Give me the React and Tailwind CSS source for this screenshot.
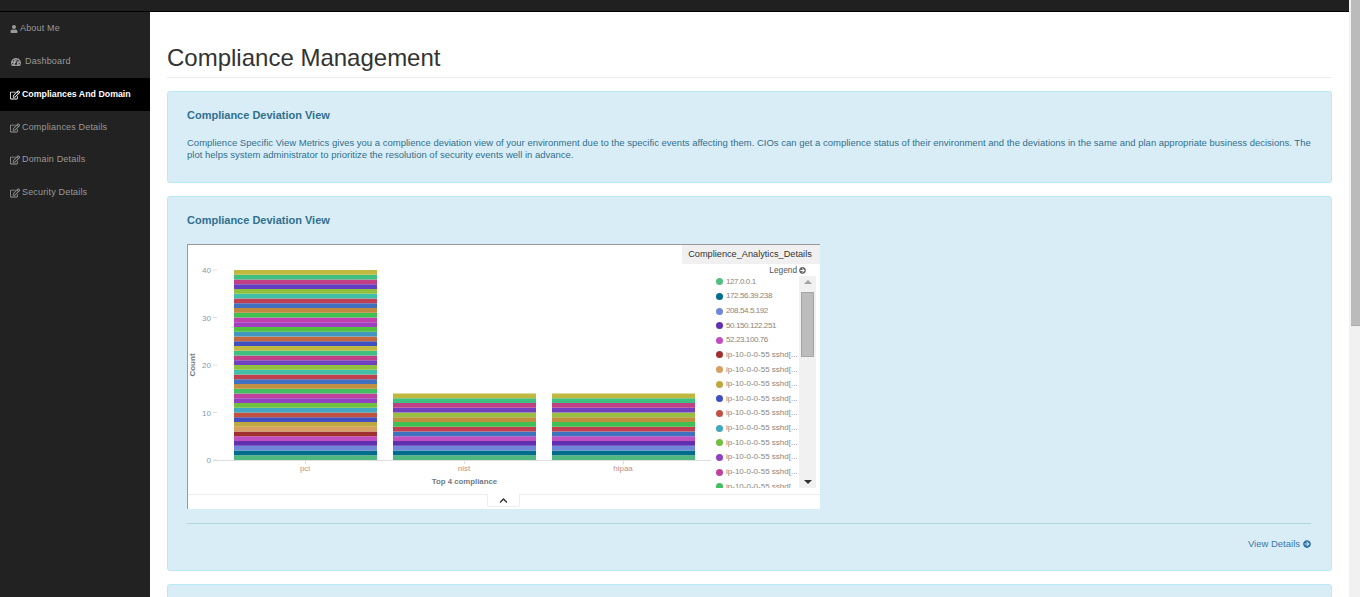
import React from "react"
import { FaUser, FaTachometerAlt, FaRegEdit, FaArrowCircleRight, FaChevronUp } from "react-icons/fa"

const menu = [
  { label: "About Me", icon: FaUser, iconSize: "text-[8px]", row: "h-[33px] gap-[2px] pl-[10px] text-[#999] text-[9px] tracking-[0.17px]" },
  { label: "Dashboard", icon: FaTachometerAlt, iconSize: "text-[10px]", row: "h-[33px] gap-[4px] pl-[11px] text-[#999] text-[9px] tracking-[0.17px]" },
  { label: "Compliances And Domain", icon: FaRegEdit, iconSize: "text-[10px]", row: "h-[33px] gap-[2px] pl-[10px] bg-black text-white font-bold text-[8.8px]" },
  { label: "Compliances Details", icon: FaRegEdit, iconSize: "text-[10px]", row: "h-[33px] gap-[2px] pl-[10px] text-[#999] text-[9px] tracking-[0.17px]" },
  { label: "Domain Details", icon: FaRegEdit, iconSize: "text-[10px]", row: "h-[32px] gap-[2px] pl-[10px] pb-[1px] text-[#999] text-[9px] tracking-[0.17px]" },
  { label: "Security Details", icon: FaRegEdit, iconSize: "text-[10px]", row: "h-[33px] gap-[2px] pl-[10px] text-[#999] text-[9px] tracking-[0.17px]" },
]

// bottom to top, one unit of the count per stripe
const palette = [
  "#50b87f", "#006e8a", "#7086d9", "#6030b0", "#c050c0", "#a03030", "#d8a060", "#c0a840",
  "#4050c0", "#c05040", "#40a8c0", "#70c040", "#9040c0", "#c040a0", "#40c060", "#c09040",
  "#4070c0", "#c04050", "#40c0a8", "#90c040", "#7040c0", "#c04088", "#40c080", "#c0b840",
  "#4050c0", "#c06840", "#4098c0", "#50c040", "#a040c0", "#c040b0", "#40c050", "#c08840",
  "#4070c0", "#c04058", "#40c0a8", "#90c040", "#6040c0", "#c04088", "#40c080", "#c0b840",
]
const shortBar = [
  "#50b87f", "#006e8a", "#7086d9", "#6030b0", "#c050c0", "#4070c0", "#c04050",
  "#40c050", "#c09040", "#98c040", "#7040c0", "#c04088", "#40c080", "#c0b840",
]

const legend = [
  ["127.0.0.1", "#50c080"],
  ["172.56.39.238", "#006e8a"],
  ["208.54.5.192", "#7086d9"],
  ["50.150.122.251", "#6030b0"],
  ["52.23.100.76", "#c050c0"],
  ["ip-10-0-0-55 sshd[...", "#a03030"],
  ["ip-10-0-0-55 sshd[...", "#d8a060"],
  ["ip-10-0-0-55 sshd[...", "#c0a840"],
  ["ip-10-0-0-55 sshd[...", "#4050c0"],
  ["ip-10-0-0-55 sshd[...", "#c05040"],
  ["ip-10-0-0-55 sshd[...", "#40a8c0"],
  ["ip-10-0-0-55 sshd[...", "#70c040"],
  ["ip-10-0-0-55 sshd[...", "#9040c0"],
  ["ip-10-0-0-55 sshd[...", "#c040a0"],
  ["ip-10-0-0-55 sshd[...", "#40c060"],
]

const UNIT = 4.75
const BASE = 460

function Bar({ x, colors }) {
  return colors.map((c, i) => (
    <rect key={i} x={x} y={BASE - (i + 1) * UNIT} width={143} height={UNIT} fill={c} />
  ))
}

function Plot() {
  return (
    <svg className="block shrink-0" width="525" height="249" viewBox="188 245 525 249" fontFamily="Liberation Sans, sans-serif">
      {[0, 10, 20, 30, 40].map((t) => {
        const y = BASE - t * UNIT
        return (
          <g key={t}>
            <line x1="213" x2="217" y1={y} y2={y} stroke="#ddd" />
            <text x="211" y={y + 3} textAnchor="end" fontSize="8" fill="#7f9ab0">{t}</text>
          </g>
        )
      })}
      <text transform="translate(195 365) rotate(-90)" textAnchor="middle" fontSize="8" fontWeight="700" fill="#6f7a84">Count</text>
      <Bar x={234} colors={palette} />
      <Bar x={393} colors={shortBar} />
      <Bar x={552} colors={shortBar} />
      <line x1="213" x2="711" y1="460.5" y2="460.5" stroke="#ddd" />
      {[["pci", 305], ["nist", 464], ["hipaa", 623]].map(([name, x]) => (
        <g key={name}>
          <line x1={x + 0.5} x2={x + 0.5} y1="461" y2="464" stroke="#ddd" />
          <text x={x} y="471" textAnchor="middle" fontSize="8" fill="#c08f88">{name}</text>
        </g>
      ))}
      <text x="464.5" y="484" textAnchor="middle" fontSize="7.8" fontWeight="700" fill="#6f7a84">Top 4 compliance</text>
    </svg>
  )
}

function Legend() {
  return (
    <div className="flex min-w-0 flex-1 flex-col pt-[19px]">
      <div className="flex h-[12px] items-center justify-end gap-[2px] pr-[14px] text-[8.3px] leading-none text-[#555]">
        Legend <FaArrowCircleRight className="text-[7px] text-[#666]" />
      </div>
      <div className="flex h-[212px] overflow-hidden">
        <ul className="-mt-[1.6px] flex w-[86px] shrink-0 flex-col overflow-hidden pl-[3px]">
          {legend.map(([name, color], i) => (
            <li
              key={i}
              className={
                i < 5
                  ? "flex h-[14.65px] shrink-0 items-center gap-[3px] whitespace-nowrap text-[8px] leading-none tracking-[-0.4px] text-[#8b857d]"
                  : "flex h-[14.65px] shrink-0 items-center gap-[3px] whitespace-nowrap text-[8px] leading-none text-[#8b857d]"
              }
            >
              <span className="h-[7px] w-[7px] shrink-0 rounded-full" style={{ backgroundColor: color }} />
              {name}
            </li>
          ))}
        </ul>
        <div className="flex w-[17px] shrink-0 flex-col items-center bg-[#f1f1f1]">
          <div className="mt-[4px] h-0 w-0 border-x-[4px] border-b-[4px] border-x-transparent border-b-[#a3a3a3]" />
          <div className="mt-[8px] h-[65px] w-[13px] border border-[#a5a5a5] bg-[#bcbcbc]" />
          <div className="mt-auto mb-[4px] h-0 w-0 border-x-[4px] border-t-[4px] border-x-transparent border-t-[#333]" />
        </div>
      </div>
    </div>
  )
}

function Chart() {
  return (
    <div className="relative w-[633px] border-l border-t border-[#999] bg-white">
      <div className="absolute right-0 top-0 flex h-[19px] w-[138px] items-center justify-center rounded-bl-[2px] bg-[#f0f0f0] pr-[2px] text-[9.2px] font-medium text-[#333]">
        Complience_Analytics_Details
      </div>
      <div className="flex h-[249px]">
        <Plot />
        <Legend />
      </div>
      <div className="flex h-[15px] justify-center border-t border-[#eee] pr-[2px]">
        <div className="-mt-px flex h-[13px] w-[33px] items-center justify-center rounded-b-[2px] border border-t-0 border-[#eee] bg-white text-[9px] text-[#333]">
          <FaChevronUp />
        </div>
      </div>
    </div>
  )
}

export default function App() {
  return (
    <div className="flex h-[597px] overflow-hidden bg-white font-['Liberation_Sans',Arial,sans-serif]">
      <div className="flex min-w-0 flex-1 flex-col">
        <div className="h-[12px] shrink-0 border-b border-black bg-[#202020]" />
        <div className="flex min-h-0 flex-1">
          <nav className="w-[150px] shrink-0 bg-[#222]">
            {menu.map((m) => (
              <div key={m.label} className={"flex items-center " + m.row}>
                <m.icon className={"shrink-0 " + m.iconSize} />
                {m.label}
              </div>
            ))}
          </nav>
          <main className="min-w-0 flex-1 overflow-hidden px-[17px]">
            <h1 className="border-b border-[#eee] pb-[3px] pt-[30px] text-[24px] font-normal leading-[32px] text-[#333]">
              Compliance Management
            </h1>
            <section className="mt-[13px] h-[92px] rounded-[3px] border border-[#bce8f1] bg-[#d9edf7] pl-[19px] pr-[20px] pt-[16px] text-[#31708f]">
              <h2 className="text-[11px] font-bold leading-[14px]">Compliance Deviation View</h2>
              <p className="mt-[15px] text-[9.5px] leading-[12px]">
                Complience Specific View Metrics gives you a complience deviation view of your environment due to the specific events affecting them. CIOs can get a complience status of their environment and the deviations in the same and plan appropriate business decisions. The plot helps system administrator to prioritize the resolution of security events well in advance.
              </p>
            </section>
            <section className="mt-[13px] h-[375px] rounded-[3px] border border-[#bce8f1] bg-[#d9edf7] pl-[19px] pr-[20px] pt-[16px] text-[#31708f]">
              <h2 className="mb-[17px] text-[11px] font-bold leading-[14px]">Compliance Deviation View</h2>
              <Chart />
              <div className="mt-[14px] border-t border-[#b5d3df]" />
              <div className="mt-[14px] flex items-center justify-end gap-[3px] text-[9.5px] leading-[12px] text-[#3a78ae]">
                View Details <FaArrowCircleRight className="text-[8px] text-[#2a6da6]" />
              </div>
            </section>
            <section className="mt-[13px] h-[120px] rounded-[3px] border border-[#bce8f1] bg-[#d9edf7]" />
          </main>
        </div>
      </div>
      <div className="w-[11px] shrink-0 bg-[#f1f1f1] pl-[2px]">
        <div className="h-[326px] border-b border-[#aaa] bg-[#bbb]" />
      </div>
    </div>
  )
}
